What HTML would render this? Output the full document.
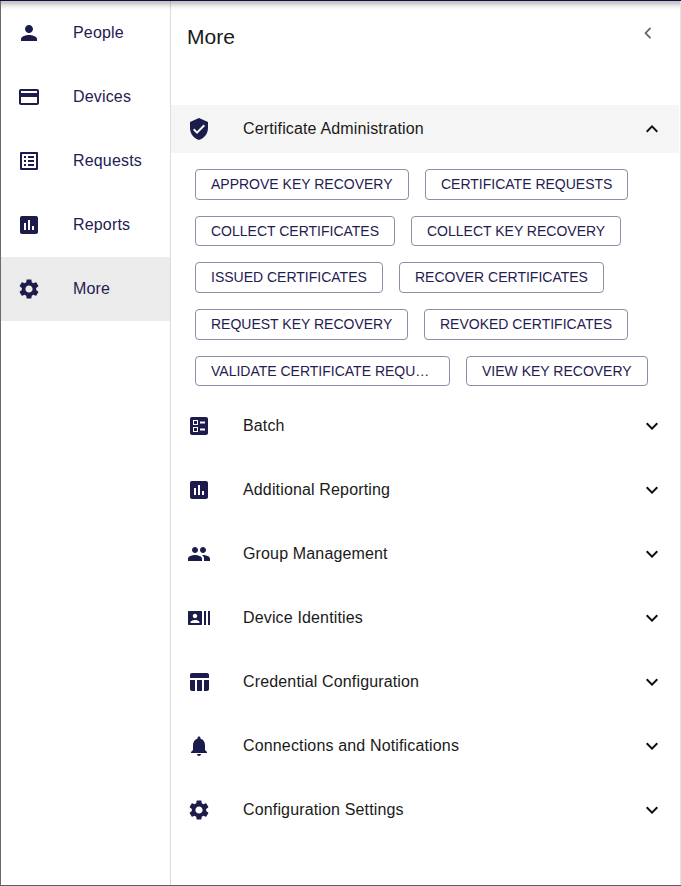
<!DOCTYPE html>
<html><head><meta charset="utf-8">
<style>
*{box-sizing:border-box;margin:0;padding:0}
html,body{width:681px;height:886px;overflow:hidden;background:#fff}
body{font-family:"Liberation Sans",Arial,sans-serif;color:#1a1a1a;position:relative}
.ln{position:absolute;z-index:5}
.shadow{position:absolute;left:1px;top:1px;width:680px;height:10px;background:linear-gradient(rgba(0,0,0,0.224) 5%,rgba(0,0,0,0.227) 15%,rgba(0,0,0,0.188) 25%,rgba(0,0,0,0.141) 35%,rgba(0,0,0,0.100) 45%,rgba(0,0,0,0.070) 55%,rgba(0,0,0,0.043) 65%,rgba(0,0,0,0.024) 75%,rgba(0,0,0,0.012) 85%,rgba(0,0,0,0.004) 95%);z-index:4}
.side{position:absolute;left:1px;top:1px;width:170px;height:884px;border-right:1px solid #dcdcdc;background:#fff}
.nav{position:relative;height:64px;width:169px}
.nav.sel{background:#ebebeb}
.nav svg{position:absolute;left:16px;top:20px;width:24px;height:24px;fill:#1b1c4b}
.nav span{position:absolute;left:72px;top:22px;font-size:16px;line-height:20px;color:#1f2050;letter-spacing:.17px}
.main{position:absolute;left:171px;top:1px;width:509px;height:884px}
h1{position:absolute;left:16px;top:24px;font-size:21px;font-weight:400;line-height:24px;color:#1a1a1a}
.back{position:absolute;left:466px;top:20px;width:24px;height:24px}
.sec{position:absolute;left:0;width:508px;height:48px}
.sec.open{background:#f5f5f5}
.sec svg.ic{position:absolute;left:16px;top:12px;width:24px;height:24px;fill:#1b1c4b}
.sec svg.ar{position:absolute;left:469px;top:12px;width:24px;height:24px;fill:#111}
.sec span{position:absolute;left:72px;top:14px;font-size:16px;line-height:20px;color:#1a1a1a;letter-spacing:.15px}
.btn{position:absolute;height:31px;border:1px solid #8d8ea6;border-radius:4px;font-size:14px;line-height:29px;color:#1f2050;padding:0 15px;white-space:nowrap;letter-spacing:0;overflow:hidden;text-overflow:ellipsis}
</style></head><body>
<div class="side">
<div class="nav"><svg viewBox="0 0 24 24"><path d="M12 12c2.210 0 4-1.790 4-4s-1.790-4-4-4-4 1.790-4 4 1.790 4 4 4zm0 2c-2.670 0-8 1.340-8 4v2h16v-2c0-2.660-5.330-4-8-4z"/></svg><span>People</span></div>
<div class="nav"><svg viewBox="0 0 24 24"><path d="M20 4H4c-1.110 0-1.990.89-1.990 2L2 18c0 1.110.89 2 2 2h16c1.110 0 2-.89 2-2V6c0-1.110-.89-2-2-2zm0 14H4v-6h16v6zm0-10H4V6h16v2z"/></svg><span>Devices</span></div>
<div class="nav"><svg viewBox="0 0 24 24"><path d="M19 5v14H5V5h14m1.100-2H3.900c-.5 0-.9.4-.9.9v16.200c0 .4.4.9.9.9h16.200c.4 0 .9-.5.9-.9V3.900c0-.5-.5-.9-.9-.9zM11 7h6v2h-6V7zm0 4h6v2h-6v-2zm0 4h6v2h-6zM7 7h2v2H7zm0 4h2v2H7zm0 4h2v2H7z"/></svg><span>Requests</span></div>
<div class="nav"><svg viewBox="0 0 24 24"><path d="M19 3H5c-1.100 0-2 .9-2 2v14c0 1.100.9 2 2 2h14c1.100 0 2-.9 2-2V5c0-1.100-.9-2-2-2zM9 17H7v-7h2v7zm4 0h-2V7h2v10zm4 0h-2v-4h2v4z"/></svg><span>Reports</span></div>
<div class="nav sel"><svg viewBox="0 0 24 24"><path d="M19.140 12.940c.04-.3.060-.61.060-.94 0-.32-.02-.64-.07-.94l2.030-1.580c.18-.14.230-.41.120-.61l-1.920-3.320c-.12-.22-.37-.29-.59-.22l-2.390.96c-.5-.38-1.030-.7-1.620-.94l-.36-2.540c-.04-.24-.24-.41-.48-.41h-3.840c-.24 0-.43.170-.47.410l-.36 2.540c-.59.240-1.130.57-1.620.94l-2.390-.96c-.22-.08-.47 0-.59.220L2.740 8.870c-.12.210-.08.470.12.610l2.030 1.580c-.05.3-.09.630-.09.940s.02.640.07.940l-2.030 1.580c-.18.140-.23.410-.12.610l1.920 3.320c.12.220.37.290.59.220l2.390-.96c.5.380 1.030.7 1.620.94l.36 2.540c.05.240.24.410.48.410h3.840c.24 0 .44-.17.470-.41l.36-2.540c.59-.24 1.130-.56 1.620-.94l2.390.96c.22.080.47 0 .59-.22l1.920-3.320c.12-.22.070-.47-.12-.61l-2.010-1.580zM12 15.600c-1.980 0-3.600-1.620-3.600-3.600s1.620-3.600 3.600-3.600 3.600 1.620 3.600 3.600-1.620 3.600-3.600 3.600z"/></svg><span>More</span></div>
</div>
<div class="main">
<h1>More</h1>
<svg class="back" viewBox="0 0 24 24"><path d="M13 7.400L8.500 12.050L13 16.700" fill="none" stroke="#646464" stroke-width="1.750" stroke-linecap="round" stroke-linejoin="round"/></svg>
<div class="sec open" style="top:104px"><svg class="ic" viewBox="0 0 24 24"><path d="M12 1L3 5v6c0 5.550 3.840 10.740 9 12 5.160-1.260 9-6.450 9-12V5l-9-4zm-2 16l-4-4 1.410-1.410L10 14.170l6.590-6.590L18 9l-8 8z"/></svg><span>Certificate Administration</span><svg class="ar" viewBox="0 0 24 24"><path d="M12 8l-6 6 1.410 1.410L12 10.830l4.590 4.580L18 14z"/></svg></div>
<div class="btn" style="left:24px;top:168px">APPROVE KEY RECOVERY</div>
<div class="btn" style="left:254px;top:168px">CERTIFICATE REQUESTS</div>
<div class="btn" style="left:24px;top:215px;height:30px">COLLECT CERTIFICATES</div>
<div class="btn" style="left:240px;top:215px;height:30px">COLLECT KEY RECOVERY</div>
<div class="btn" style="left:24px;top:261px">ISSUED CERTIFICATES</div>
<div class="btn" style="left:228px;top:261px">RECOVER CERTIFICATES</div>
<div class="btn" style="left:24px;top:308px">REQUEST KEY RECOVERY</div>
<div class="btn" style="left:253px;top:308px">REVOKED CERTIFICATES</div>
<div class="btn" style="left:24px;top:355px;height:30px;width:255px">VALIDATE CERTIFICATE REQUESTS</div>
<div class="btn" style="left:295px;top:355px;height:30px">VIEW KEY RECOVERY</div>
<div class="sec" style="top:401px"><svg class="ic" viewBox="0 0 24 24"><path d="M13 9.500h5v-2h-5v2zm0 7h5v-2h-5v2zm6 4.500H5c-1.100 0-2-.9-2-2V5c0-1.100.9-2 2-2h14c1.100 0 2 .9 2 2v14c0 1.100-.9 2-2 2zM6 11h5V6H6v5zm1-4h3v3H7V7zM6 18h5v-5H6v5zm1-4h3v3H7v-3z" fill-rule="evenodd"/></svg><span>Batch</span><svg class="ar" viewBox="0 0 24 24"><path d="M16.590 8.590L12 13.170 7.410 8.590 6 10l6 6 6-6z"/></svg></div>
<div class="sec" style="top:465px"><svg class="ic" viewBox="0 0 24 24"><path d="M19 3H5c-1.100 0-2 .9-2 2v14c0 1.100.9 2 2 2h14c1.100 0 2-.9 2-2V5c0-1.100-.9-2-2-2zM9 17H7v-7h2v7zm4 0h-2V7h2v10zm4 0h-2v-4h2v4z"/></svg><span>Additional Reporting</span><svg class="ar" viewBox="0 0 24 24"><path d="M16.590 8.590L12 13.170 7.410 8.590 6 10l6 6 6-6z"/></svg></div>
<div class="sec" style="top:529px"><svg class="ic" viewBox="0 0 24 24"><path d="M16 11c1.660 0 2.990-1.340 2.990-3S17.660 5 16 5c-1.660 0-3 1.340-3 3s1.340 3 3 3zm-8 0c1.660 0 2.990-1.340 2.990-3S9.660 5 8 5C6.340 5 5 6.340 5 8s1.340 3 3 3zm0 2c-2.330 0-7 1.170-7 3.500V19h14v-2.500c0-2.330-4.670-3.500-7-3.500zm8 0c-.29 0-.62.020-.97.050 1.160.84 1.970 1.970 1.970 3.450V19h6v-2.500c0-2.330-4.670-3.500-7-3.500z"/></svg><span>Group Management</span><svg class="ar" viewBox="0 0 24 24"><path d="M16.590 8.590L12 13.170 7.410 8.590 6 10l6 6 6-6z"/></svg></div>
<div class="sec" style="top:593px"><svg class="ic" viewBox="0 0 24 24"><path d="M21 5v14h2V5h-2zm-4 14h2V5h-2v14zM14 5H2c-.55 0-1 .45-1 1v12c0 .55.45 1 1 1h12c.55 0 1-.45 1-1V6c0-.55-.45-1-1-1zM8 7.750c1.240 0 2.250 1.010 2.250 2.250S9.240 12.250 8 12.250 5.750 11.240 5.750 10 6.760 7.750 8 7.750zM12.500 17h-9v-.75c0-1.500 3-2.250 4.500-2.250s4.500.75 4.500 2.250V17z"/></svg><span>Device Identities</span><svg class="ar" viewBox="0 0 24 24"><path d="M16.590 8.590L12 13.170 7.410 8.590 6 10l6 6 6-6z"/></svg></div>
<div class="sec" style="top:657px"><svg class="ic" viewBox="0 0 24 24"><path d="M10 10.020h5V21h-5zM17 21h3c1.100 0 2-.9 2-2v-9h-5v11zm3-18H5c-1.100 0-2 .9-2 2v3h19V5c0-1.100-.9-2-2-2zM3 19c0 1.100.9 2 2 2h3V10H3v9z"/></svg><span>Credential Configuration</span><svg class="ar" viewBox="0 0 24 24"><path d="M16.590 8.590L12 13.170 7.410 8.590 6 10l6 6 6-6z"/></svg></div>
<div class="sec" style="top:721px"><svg class="ic" viewBox="0 0 24 24"><path d="M12 22c1.100 0 2-.9 2-2h-4c0 1.100.89 2 2 2zm6-6v-5c0-3.070-1.640-5.640-4.500-6.320V4c0-.83-.67-1.500-1.500-1.500s-1.500.67-1.500 1.500v.68C7.630 5.360 6 7.920 6 11v5l-2 2v1h16v-1l-2-2z"/></svg><span>Connections and Notifications</span><svg class="ar" viewBox="0 0 24 24"><path d="M16.590 8.590L12 13.170 7.410 8.590 6 10l6 6 6-6z"/></svg></div>
<div class="sec" style="top:785px"><svg class="ic" viewBox="0 0 24 24"><path d="M19.140 12.940c.04-.3.060-.61.060-.94 0-.32-.02-.64-.07-.94l2.030-1.580c.18-.14.230-.41.120-.61l-1.920-3.320c-.12-.22-.37-.29-.59-.22l-2.390.96c-.5-.38-1.030-.7-1.620-.94l-.36-2.540c-.04-.24-.24-.41-.48-.41h-3.840c-.24 0-.43.170-.47.410l-.36 2.540c-.59.240-1.130.57-1.620.94l-2.390-.96c-.22-.08-.47 0-.59.220L2.740 8.870c-.12.210-.08.470.12.610l2.030 1.580c-.05.3-.09.630-.09.940s.02.640.07.940l-2.030 1.580c-.18.140-.23.410-.12.610l1.920 3.320c.12.220.37.290.59.220l2.390-.96c.5.380 1.030.7 1.620.94l.36 2.540c.05.240.24.410.48.410h3.840c.24 0 .44-.17.470-.41l.36-2.540c.59-.24 1.130-.56 1.620-.94l2.390.96c.22.080.47 0 .59-.22l1.920-3.320c.12-.22.070-.47-.12-.61l-2.010-1.580zM12 15.600c-1.980 0-3.600-1.620-3.600-3.600s1.620-3.600 3.600-3.600 3.600 1.620 3.600 3.600-1.620 3.600-3.600 3.600z"/></svg><span>Configuration Settings</span><svg class="ar" viewBox="0 0 24 24"><path d="M16.590 8.590L12 13.170 7.410 8.590 6 10l6 6 6-6z"/></svg></div>
</div>
<div class="shadow"></div>
<div class="ln" style="left:680px;top:1px;width:1px;height:884px;background:#e2e2e2"></div><div class="ln" style="left:0;top:1px;width:1px;height:884px;background:#6a6a6a"></div><div class="ln" style="left:0;top:885px;width:681px;height:1px;background:#5e5e5e"></div><div class="ln" style="left:0;top:0;width:681px;height:1px;background:#0d0d42"></div>
</body></html>
